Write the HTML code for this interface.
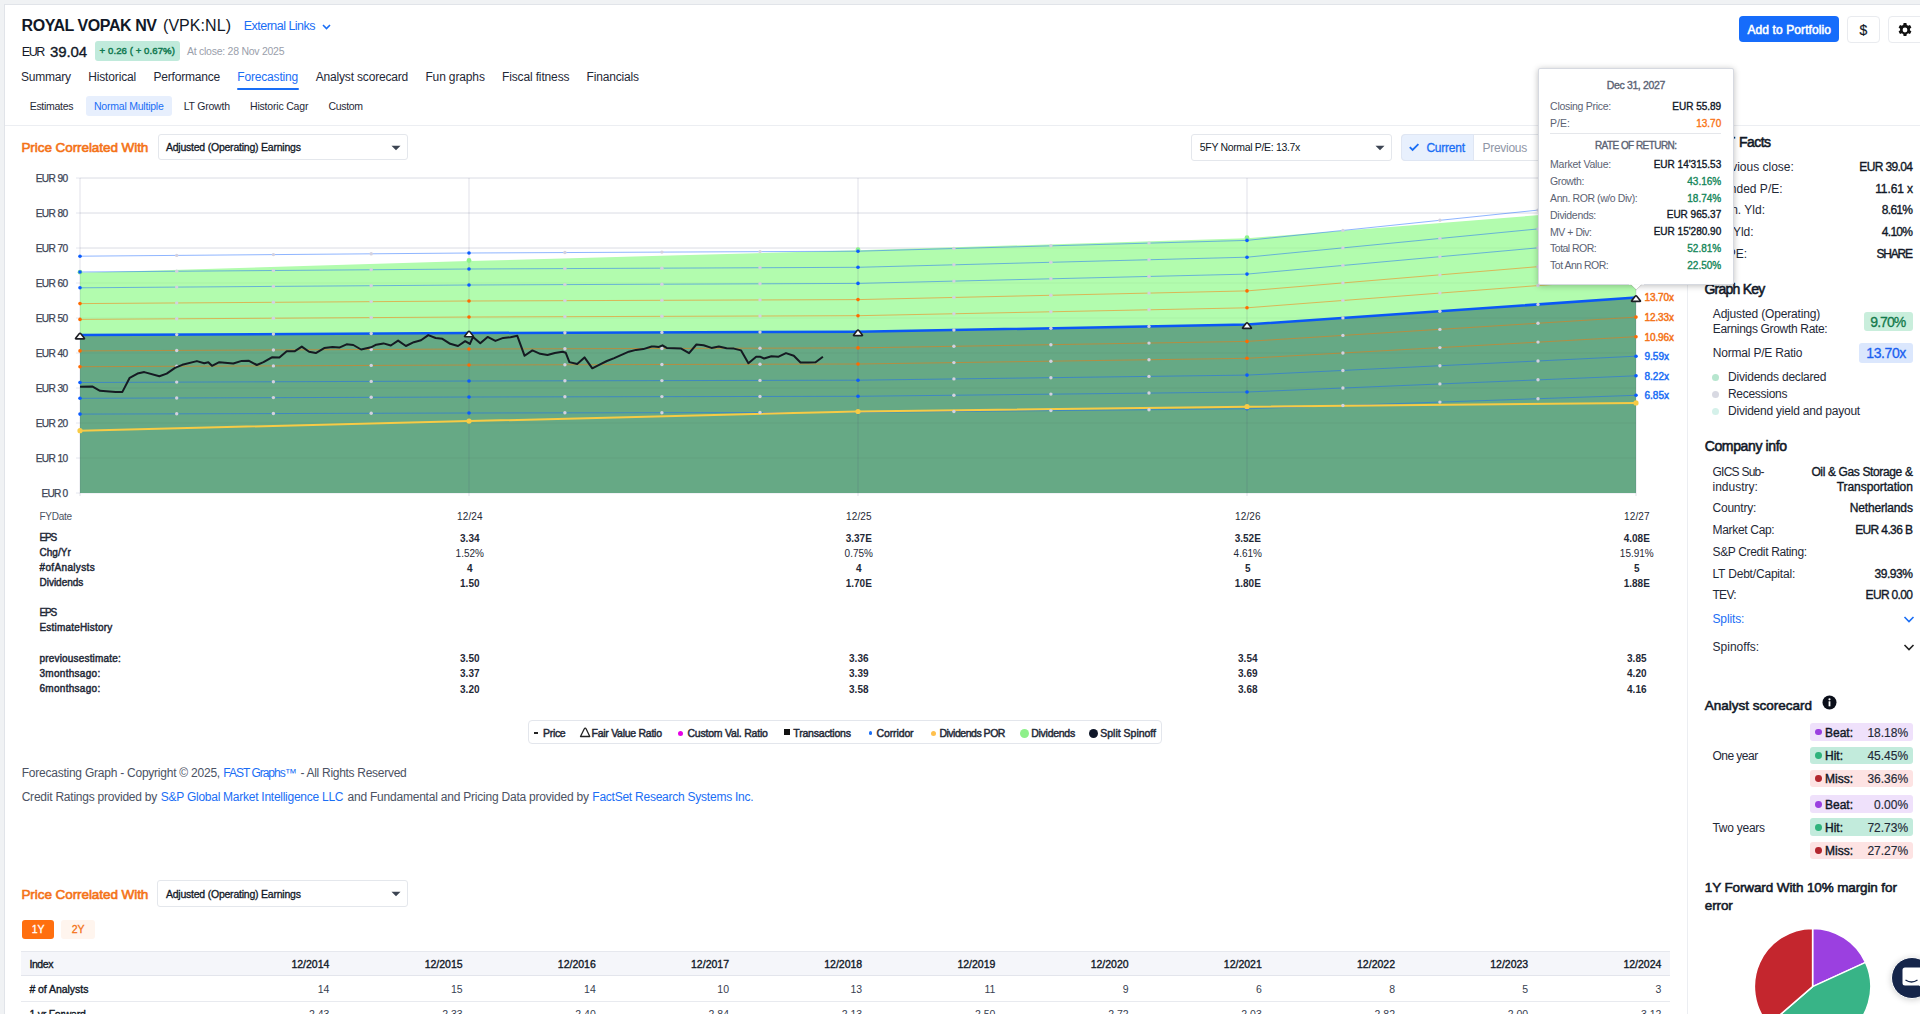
<!DOCTYPE html><html><head><meta charset="utf-8"><style>
html,body{margin:0;padding:0;width:1920px;height:1014px;overflow:hidden;background:#f0f2f4;}
body{font-family:"Liberation Sans",sans-serif;position:relative;}
.t{position:absolute;white-space:nowrap;line-height:1;}
.b{position:absolute;box-sizing:border-box;}
.abs{position:absolute;}
</style></head><body>
<div class="b" style="left:4.00px;top:3.50px;width:1926.00px;height:1026.50px;background:#fff;border:1px solid #e1e4e9;"></div>
<div class="t" style="left:21.50px;top:18.25px;font-size:16px;color:#111827;font-weight:700;letter-spacing:-0.429px;">ROYAL VOPAK NV</div>
<div class="t" style="left:163.00px;top:18.25px;font-size:16px;color:#111827;letter-spacing:0.061px;">(VPK:NL)</div>
<div class="t" style="left:243.80px;top:19.91px;font-size:12.5px;color:#1a6ef5;letter-spacing:-0.524px;">External Links</div>
<svg class="abs" style="left:321px;top:22px" width="12" height="10"><path d="M2,3 L5.5,6.5 L9,3" fill="none" stroke="#1a6ef5" stroke-width="1.6"/></svg>
<div class="t" style="left:21.80px;top:45.71px;font-size:12.5px;color:#111827;letter-spacing:-1.446px;">EUR</div>
<div class="t" style="left:49.90px;top:43.59px;font-size:15px;color:#111827;-webkit-text-stroke:0.35px #111827;letter-spacing:-0.059px;">39.04</div>
<div class="b" style="left:94.60px;top:41.30px;width:85.00px;height:19.30px;background:#c0eadb;border-radius:3px;"></div>
<div class="t" style="left:99.60px;top:45.97px;font-size:9.6px;color:#137a52;-webkit-text-stroke:0.45px #137a52;letter-spacing:0.070px;">+ 0.26 ( + 0.67%)</div>
<div class="t" style="left:187.00px;top:45.91px;font-size:10.5px;color:#9aa0ab;letter-spacing:-0.261px;">At close: 28 Nov 2025</div>
<div class="t" style="left:21.10px;top:71.14px;font-size:12px;color:#1f2937;letter-spacing:-0.240px;">Summary</div>
<div class="t" style="left:88.20px;top:71.14px;font-size:12px;color:#1f2937;letter-spacing:-0.138px;">Historical</div>
<div class="t" style="left:153.50px;top:71.14px;font-size:12px;color:#1f2937;letter-spacing:-0.200px;">Performance</div>
<div class="t" style="left:237.30px;top:71.14px;font-size:12px;color:#1a6ef5;letter-spacing:-0.180px;">Forecasting</div>
<div class="t" style="left:315.70px;top:71.14px;font-size:12px;color:#1f2937;letter-spacing:-0.173px;">Analyst scorecard</div>
<div class="t" style="left:425.40px;top:71.14px;font-size:12px;color:#1f2937;letter-spacing:-0.134px;">Fun graphs</div>
<div class="t" style="left:502.00px;top:71.14px;font-size:12px;color:#1f2937;letter-spacing:-0.142px;">Fiscal fitness</div>
<div class="t" style="left:586.60px;top:71.14px;font-size:12px;color:#1f2937;letter-spacing:-0.169px;">Financials</div>
<div class="b" style="left:237.00px;top:87.60px;width:61.60px;height:2.00px;background:#1a6ef5;border-radius:1px;"></div>
<div class="b" style="left:85.70px;top:96.00px;width:86.20px;height:20.00px;background:#e7effd;border-radius:3px;"></div>
<div class="t" style="left:29.70px;top:100.91px;font-size:10.5px;color:#1f2937;letter-spacing:-0.287px;">Estimates</div>
<div class="t" style="left:94.00px;top:100.91px;font-size:10.5px;color:#1a6ef5;letter-spacing:-0.224px;">Normal Multiple</div>
<div class="t" style="left:183.70px;top:100.91px;font-size:10.5px;color:#1f2937;letter-spacing:-0.218px;">LT Growth</div>
<div class="t" style="left:250.00px;top:100.91px;font-size:10.5px;color:#1f2937;letter-spacing:-0.190px;">Historic Cagr</div>
<div class="t" style="left:328.50px;top:100.91px;font-size:10.5px;color:#1f2937;letter-spacing:-0.315px;">Custom</div>
<div class="b" style="left:5.00px;top:124.50px;width:1915.00px;height:1.50px;background:#eceef2;"></div>
<div class="b" style="left:1739.00px;top:16.00px;width:100.00px;height:26.30px;background:#166cfb;border-radius:4px;"></div>
<div class="t" style="left:1747.50px;top:23.64px;font-size:12px;color:#fff;-webkit-text-stroke:0.55px #fff;letter-spacing:0.097px;">Add to Portfolio</div>
<div class="b" style="left:1847.00px;top:15.50px;width:33.00px;height:27.00px;background:#fff;border:1px solid #e9ebef;border-radius:4px;"></div>
<div class="t" style="left:1859.61px;top:22.64px;font-size:14px;color:#111827;-webkit-text-stroke:0.20px #111827;">$</div>
<div class="b" style="left:1888.00px;top:15.50px;width:42.00px;height:27.00px;background:#fff;border:1px solid #e9ebef;border-radius:4px;"></div>
<svg class="abs" style="left:1897px;top:21.5px" width="16" height="16" viewBox="0 0 16 16"><path fill="#111" d="M9.4 1h-2.8l-.4 2a5 5 0 0 0-1.3.8l-1.9-.7-1.4 2.4 1.5 1.3a5 5 0 0 0 0 1.5l-1.5 1.3 1.4 2.4 1.9-.7a5 5 0 0 0 1.3.8l.4 2h2.8l.4-2a5 5 0 0 0 1.3-.8l1.9.7 1.4-2.4-1.5-1.3a5 5 0 0 0 0-1.5l1.5-1.3-1.4-2.4-1.9.7a5 5 0 0 0-1.3-.8zM8 5.6a2.4 2.4 0 1 1 0 4.8 2.4 2.4 0 0 1 0-4.8z"/></svg>
<div class="t" style="left:21.40px;top:141.07px;font-size:13.5px;color:#f47216;-webkit-text-stroke:0.60px #f47216;letter-spacing:-0.065px;">Price Correlated With</div>
<div class="b" style="left:157.60px;top:133.80px;width:250.70px;height:26.60px;background:#fff;border:1px solid #e4e7ec;border-radius:3px;"></div>
<div class="t" style="left:165.90px;top:141.91px;font-size:10.5px;color:#111827;-webkit-text-stroke:0.30px #111827;letter-spacing:-0.223px;">Adjusted (Operating) Earnings</div>
<svg class="abs" style="left:390.4px;top:143.6px" width="12" height="8"><path d="M1.5,1.8 L10.5,1.8 L6,6.2Z" fill="#3c4452"/></svg>
<div class="b" style="left:1191.30px;top:133.90px;width:201.10px;height:26.70px;background:#fff;border:1px solid #e4e7ec;border-radius:3px;"></div>
<div class="t" style="left:1199.80px;top:142.06px;font-size:10.5px;color:#111827;letter-spacing:-0.334px;">5FY Normal P/E: 13.7x</div>
<svg class="abs" style="left:1374.0px;top:143.8px" width="12" height="8"><path d="M1.5,1.8 L10.5,1.8 L6,6.2Z" fill="#3c4452"/></svg>
<div class="b" style="left:1401.30px;top:133.90px;width:168.70px;height:27.30px;background:#fff;border:1px solid #e4e7ec;border-radius:4px;"></div>
<div class="b" style="left:1401.30px;top:133.90px;width:73.00px;height:27.30px;background:#e8f0fd;border:1px solid #dfe6f3;border-radius:4px 0 0 4px;"></div>
<svg class="abs" style="left:1408px;top:141px" width="12" height="12"><path d="M1.8,6.2 L4.6,9 L10.4,3.2" fill="none" stroke="#1a6ef5" stroke-width="1.8"/></svg>
<div class="t" style="left:1426.40px;top:141.94px;font-size:12px;color:#1a6ef5;-webkit-text-stroke:0.30px #1a6ef5;letter-spacing:-0.236px;">Current</div>
<div class="t" style="left:1482.40px;top:141.94px;font-size:12px;color:#8f96a6;letter-spacing:-0.255px;">Previous</div>
<svg class="abs" width="1920" height="1014" viewBox="0 0 1920 1014" style="left:0;top:0">
<line x1="76" y1="493.0" x2="1636" y2="493.0" stroke="#e4e6ee" stroke-width="1"/>
<line x1="76" y1="458.0" x2="1636" y2="458.0" stroke="#e4e6ee" stroke-width="1"/>
<line x1="76" y1="423.0" x2="1636" y2="423.0" stroke="#e4e6ee" stroke-width="1"/>
<line x1="76" y1="388.0" x2="1636" y2="388.0" stroke="#e4e6ee" stroke-width="1"/>
<line x1="76" y1="353.0" x2="1636" y2="353.0" stroke="#e4e6ee" stroke-width="1"/>
<line x1="76" y1="318.0" x2="1636" y2="318.0" stroke="#e4e6ee" stroke-width="1"/>
<line x1="76" y1="283.0" x2="1636" y2="283.0" stroke="#e4e6ee" stroke-width="1"/>
<line x1="76" y1="248.0" x2="1636" y2="248.0" stroke="#e4e6ee" stroke-width="1"/>
<line x1="76" y1="213.0" x2="1636" y2="213.0" stroke="#e4e6ee" stroke-width="1"/>
<line x1="76" y1="178.0" x2="1636" y2="178.0" stroke="#e4e6ee" stroke-width="1"/>
<polygon points="80.0,272.8 469.0,261.1 858.0,250.3 1247.0,238.3 1636.0,207.5 1636.0,297.6 1247.0,324.6 858.0,331.8 469.0,333.0 80.0,335.1" fill="#b2fcae"/>
<polygon points="80.0,335.1 469.0,333.0 858.0,331.8 1247.0,324.6 1636.0,297.6 1636.0,493.0 80.0,493.0" fill="#66a985"/>
<line x1="80.0" y1="178" x2="80.0" y2="496" stroke="rgba(60,70,110,0.16)" stroke-width="1"/>
<line x1="469.0" y1="178" x2="469.0" y2="496" stroke="rgba(60,70,110,0.16)" stroke-width="1"/>
<line x1="858.0" y1="178" x2="858.0" y2="496" stroke="rgba(60,70,110,0.16)" stroke-width="1"/>
<line x1="1247.0" y1="178" x2="1247.0" y2="496" stroke="rgba(60,70,110,0.16)" stroke-width="1"/>
<line x1="1636.0" y1="178" x2="1636.0" y2="496" stroke="rgba(60,70,110,0.16)" stroke-width="1"/>
<line x1="80" y1="458.0" x2="1636" y2="458.0" stroke="rgba(0,0,0,0.045)" stroke-width="1"/>
<line x1="80" y1="423.0" x2="1636" y2="423.0" stroke="rgba(0,0,0,0.045)" stroke-width="1"/>
<line x1="80" y1="388.0" x2="1636" y2="388.0" stroke="rgba(0,0,0,0.045)" stroke-width="1"/>
<line x1="80" y1="353.0" x2="1636" y2="353.0" stroke="rgba(0,0,0,0.045)" stroke-width="1"/>
<line x1="80" y1="318.0" x2="1636" y2="318.0" stroke="rgba(0,0,0,0.045)" stroke-width="1"/>
<line x1="80" y1="283.0" x2="1636" y2="283.0" stroke="rgba(0,0,0,0.045)" stroke-width="1"/>
<line x1="80" y1="248.0" x2="1636" y2="248.0" stroke="rgba(0,0,0,0.045)" stroke-width="1"/>
<line x1="80" y1="213.0" x2="1636" y2="213.0" stroke="rgba(0,0,0,0.045)" stroke-width="1"/>
<line x1="80" y1="178.0" x2="1636" y2="178.0" stroke="rgba(0,0,0,0.045)" stroke-width="1"/>
<polyline points="80.0,256.2 469.0,253.0 858.0,251.2 1247.0,240.4 1636.0,199.9" fill="none" stroke="rgba(20,100,255,0.48)" stroke-width="1"/>
<polyline points="80.0,272.0 469.0,269.0 858.0,267.3 1247.0,257.2 1636.0,219.4" fill="none" stroke="rgba(20,100,255,0.48)" stroke-width="1"/>
<polyline points="80.0,287.8 469.0,285.0 858.0,283.4 1247.0,274.1 1636.0,239.0" fill="none" stroke="rgba(20,100,255,0.48)" stroke-width="1"/>
<polyline points="80.0,303.6 469.0,301.0 858.0,299.6 1247.0,290.9 1636.0,258.5" fill="none" stroke="rgba(255,115,0,0.5)" stroke-width="1"/>
<polyline points="80.0,319.4 469.0,317.0 858.0,315.7 1247.0,307.8 1636.0,278.1" fill="none" stroke="rgba(255,115,0,0.5)" stroke-width="1"/>
<polyline points="80.0,335.1 469.0,333.0 858.0,331.8 1247.0,324.6 1636.0,297.6" fill="none" stroke="#0a58f5" stroke-width="2.5"/>
<polyline points="80.0,350.9 469.0,349.0 858.0,347.9 1247.0,341.4 1636.0,317.1" fill="none" stroke="rgba(255,115,0,0.5)" stroke-width="1"/>
<polyline points="80.0,366.7 469.0,365.0 858.0,364.0 1247.0,358.3 1636.0,336.7" fill="none" stroke="rgba(255,115,0,0.5)" stroke-width="1"/>
<polyline points="80.0,382.5 469.0,381.0 858.0,380.2 1247.0,375.1 1636.0,356.2" fill="none" stroke="rgba(20,100,255,0.48)" stroke-width="1"/>
<polyline points="80.0,398.3 469.0,397.0 858.0,396.3 1247.0,392.0 1636.0,375.8" fill="none" stroke="rgba(20,100,255,0.48)" stroke-width="1"/>
<polyline points="80.0,414.1 469.0,413.0 858.0,412.4 1247.0,408.8 1636.0,395.3" fill="none" stroke="rgba(20,100,255,0.48)" stroke-width="1"/>
<polyline points="80.0,430.7 469.0,421.1 858.0,411.5 1247.0,406.7 1636.0,402.9" fill="none" stroke="#f7cb45" stroke-width="2"/>
<circle cx="176.7" cy="255.4" r="1.7" fill="#d3d1e0"/>
<circle cx="273.4" cy="254.6" r="1.7" fill="#d3d1e0"/>
<circle cx="371.2" cy="253.8" r="1.7" fill="#d3d1e0"/>
<circle cx="564.9" cy="252.5" r="1.7" fill="#d3d1e0"/>
<circle cx="661.9" cy="252.1" r="1.7" fill="#d3d1e0"/>
<circle cx="760.0" cy="251.6" r="1.7" fill="#d3d1e0"/>
<circle cx="953.9" cy="248.5" r="1.7" fill="#d3d1e0"/>
<circle cx="1050.9" cy="245.8" r="1.7" fill="#d3d1e0"/>
<circle cx="1149.0" cy="243.1" r="1.7" fill="#d3d1e0"/>
<circle cx="1342.9" cy="230.4" r="1.7" fill="#d3d1e0"/>
<circle cx="1439.9" cy="220.3" r="1.7" fill="#d3d1e0"/>
<circle cx="1538.0" cy="210.1" r="1.7" fill="#d3d1e0"/>
<circle cx="176.7" cy="271.3" r="1.7" fill="#d3d1e0"/>
<circle cx="273.4" cy="270.5" r="1.7" fill="#d3d1e0"/>
<circle cx="371.2" cy="269.7" r="1.7" fill="#d3d1e0"/>
<circle cx="564.9" cy="268.6" r="1.7" fill="#d3d1e0"/>
<circle cx="661.9" cy="268.2" r="1.7" fill="#d3d1e0"/>
<circle cx="760.0" cy="267.7" r="1.7" fill="#d3d1e0"/>
<circle cx="953.9" cy="264.8" r="1.7" fill="#d3d1e0"/>
<circle cx="1050.9" cy="262.3" r="1.7" fill="#d3d1e0"/>
<circle cx="1149.0" cy="259.8" r="1.7" fill="#d3d1e0"/>
<circle cx="1342.9" cy="247.9" r="1.7" fill="#d3d1e0"/>
<circle cx="1439.9" cy="238.5" r="1.7" fill="#d3d1e0"/>
<circle cx="1538.0" cy="229.0" r="1.7" fill="#d3d1e0"/>
<circle cx="176.7" cy="287.1" r="1.7" fill="#d3d1e0"/>
<circle cx="273.4" cy="286.4" r="1.7" fill="#d3d1e0"/>
<circle cx="371.2" cy="285.7" r="1.7" fill="#d3d1e0"/>
<circle cx="564.9" cy="284.6" r="1.7" fill="#d3d1e0"/>
<circle cx="661.9" cy="284.2" r="1.7" fill="#d3d1e0"/>
<circle cx="760.0" cy="283.8" r="1.7" fill="#d3d1e0"/>
<circle cx="953.9" cy="281.1" r="1.7" fill="#d3d1e0"/>
<circle cx="1050.9" cy="278.8" r="1.7" fill="#d3d1e0"/>
<circle cx="1149.0" cy="276.4" r="1.7" fill="#d3d1e0"/>
<circle cx="1342.9" cy="265.4" r="1.7" fill="#d3d1e0"/>
<circle cx="1439.9" cy="256.7" r="1.7" fill="#d3d1e0"/>
<circle cx="1538.0" cy="247.8" r="1.7" fill="#d3d1e0"/>
<circle cx="176.7" cy="302.9" r="1.7" fill="#d3d1e0"/>
<circle cx="273.4" cy="302.3" r="1.7" fill="#d3d1e0"/>
<circle cx="371.2" cy="301.6" r="1.7" fill="#d3d1e0"/>
<circle cx="564.9" cy="300.6" r="1.7" fill="#d3d1e0"/>
<circle cx="661.9" cy="300.3" r="1.7" fill="#d3d1e0"/>
<circle cx="760.0" cy="299.9" r="1.7" fill="#d3d1e0"/>
<circle cx="953.9" cy="297.4" r="1.7" fill="#d3d1e0"/>
<circle cx="1050.9" cy="295.3" r="1.7" fill="#d3d1e0"/>
<circle cx="1149.0" cy="293.1" r="1.7" fill="#d3d1e0"/>
<circle cx="1342.9" cy="282.9" r="1.7" fill="#d3d1e0"/>
<circle cx="1439.9" cy="274.9" r="1.7" fill="#d3d1e0"/>
<circle cx="1538.0" cy="266.7" r="1.7" fill="#d3d1e0"/>
<circle cx="176.7" cy="318.8" r="1.7" fill="#d3d1e0"/>
<circle cx="273.4" cy="318.2" r="1.7" fill="#d3d1e0"/>
<circle cx="371.2" cy="317.6" r="1.7" fill="#d3d1e0"/>
<circle cx="564.9" cy="316.7" r="1.7" fill="#d3d1e0"/>
<circle cx="661.9" cy="316.3" r="1.7" fill="#d3d1e0"/>
<circle cx="760.0" cy="316.0" r="1.7" fill="#d3d1e0"/>
<circle cx="953.9" cy="313.7" r="1.7" fill="#d3d1e0"/>
<circle cx="1050.9" cy="311.7" r="1.7" fill="#d3d1e0"/>
<circle cx="1149.0" cy="309.8" r="1.7" fill="#d3d1e0"/>
<circle cx="1342.9" cy="300.4" r="1.7" fill="#d3d1e0"/>
<circle cx="1439.9" cy="293.0" r="1.7" fill="#d3d1e0"/>
<circle cx="1538.0" cy="285.5" r="1.7" fill="#d3d1e0"/>
<circle cx="176.7" cy="334.6" r="1.7" fill="#d3d1e0"/>
<circle cx="273.4" cy="334.1" r="1.7" fill="#d3d1e0"/>
<circle cx="371.2" cy="333.5" r="1.7" fill="#d3d1e0"/>
<circle cx="564.9" cy="332.7" r="1.7" fill="#d3d1e0"/>
<circle cx="661.9" cy="332.4" r="1.7" fill="#d3d1e0"/>
<circle cx="760.0" cy="332.1" r="1.7" fill="#d3d1e0"/>
<circle cx="953.9" cy="330.0" r="1.7" fill="#d3d1e0"/>
<circle cx="1050.9" cy="328.2" r="1.7" fill="#d3d1e0"/>
<circle cx="1149.0" cy="326.4" r="1.7" fill="#d3d1e0"/>
<circle cx="1342.9" cy="317.9" r="1.7" fill="#d3d1e0"/>
<circle cx="1439.9" cy="311.2" r="1.7" fill="#d3d1e0"/>
<circle cx="1538.0" cy="304.4" r="1.7" fill="#d3d1e0"/>
<circle cx="176.7" cy="350.5" r="1.7" fill="#d3d1e0"/>
<circle cx="273.4" cy="350.0" r="1.7" fill="#d3d1e0"/>
<circle cx="371.2" cy="349.5" r="1.7" fill="#d3d1e0"/>
<circle cx="564.9" cy="348.7" r="1.7" fill="#d3d1e0"/>
<circle cx="661.9" cy="348.5" r="1.7" fill="#d3d1e0"/>
<circle cx="760.0" cy="348.2" r="1.7" fill="#d3d1e0"/>
<circle cx="953.9" cy="346.3" r="1.7" fill="#d3d1e0"/>
<circle cx="1050.9" cy="344.7" r="1.7" fill="#d3d1e0"/>
<circle cx="1149.0" cy="343.1" r="1.7" fill="#d3d1e0"/>
<circle cx="1342.9" cy="335.4" r="1.7" fill="#d3d1e0"/>
<circle cx="1439.9" cy="329.4" r="1.7" fill="#d3d1e0"/>
<circle cx="1538.0" cy="323.3" r="1.7" fill="#d3d1e0"/>
<circle cx="176.7" cy="366.3" r="1.7" fill="#d3d1e0"/>
<circle cx="273.4" cy="365.9" r="1.7" fill="#d3d1e0"/>
<circle cx="371.2" cy="365.4" r="1.7" fill="#d3d1e0"/>
<circle cx="564.9" cy="364.8" r="1.7" fill="#d3d1e0"/>
<circle cx="661.9" cy="364.5" r="1.7" fill="#d3d1e0"/>
<circle cx="760.0" cy="364.3" r="1.7" fill="#d3d1e0"/>
<circle cx="953.9" cy="362.6" r="1.7" fill="#d3d1e0"/>
<circle cx="1050.9" cy="361.2" r="1.7" fill="#d3d1e0"/>
<circle cx="1149.0" cy="359.7" r="1.7" fill="#d3d1e0"/>
<circle cx="1342.9" cy="353.0" r="1.7" fill="#d3d1e0"/>
<circle cx="1439.9" cy="347.6" r="1.7" fill="#d3d1e0"/>
<circle cx="1538.0" cy="342.1" r="1.7" fill="#d3d1e0"/>
<circle cx="176.7" cy="382.1" r="1.7" fill="#d3d1e0"/>
<circle cx="273.4" cy="381.8" r="1.7" fill="#d3d1e0"/>
<circle cx="371.2" cy="381.4" r="1.7" fill="#d3d1e0"/>
<circle cx="564.9" cy="380.8" r="1.7" fill="#d3d1e0"/>
<circle cx="661.9" cy="380.6" r="1.7" fill="#d3d1e0"/>
<circle cx="760.0" cy="380.4" r="1.7" fill="#d3d1e0"/>
<circle cx="953.9" cy="378.9" r="1.7" fill="#d3d1e0"/>
<circle cx="1050.9" cy="377.7" r="1.7" fill="#d3d1e0"/>
<circle cx="1149.0" cy="376.4" r="1.7" fill="#d3d1e0"/>
<circle cx="1342.9" cy="370.5" r="1.7" fill="#d3d1e0"/>
<circle cx="1439.9" cy="365.7" r="1.7" fill="#d3d1e0"/>
<circle cx="1538.0" cy="361.0" r="1.7" fill="#d3d1e0"/>
<circle cx="176.7" cy="398.0" r="1.7" fill="#d3d1e0"/>
<circle cx="273.4" cy="397.6" r="1.7" fill="#d3d1e0"/>
<circle cx="371.2" cy="397.3" r="1.7" fill="#d3d1e0"/>
<circle cx="564.9" cy="396.8" r="1.7" fill="#d3d1e0"/>
<circle cx="661.9" cy="396.6" r="1.7" fill="#d3d1e0"/>
<circle cx="760.0" cy="396.5" r="1.7" fill="#d3d1e0"/>
<circle cx="953.9" cy="395.2" r="1.7" fill="#d3d1e0"/>
<circle cx="1050.9" cy="394.1" r="1.7" fill="#d3d1e0"/>
<circle cx="1149.0" cy="393.0" r="1.7" fill="#d3d1e0"/>
<circle cx="1342.9" cy="388.0" r="1.7" fill="#d3d1e0"/>
<circle cx="1439.9" cy="383.9" r="1.7" fill="#d3d1e0"/>
<circle cx="1538.0" cy="379.8" r="1.7" fill="#d3d1e0"/>
<circle cx="176.7" cy="413.8" r="1.7" fill="#d3d1e0"/>
<circle cx="273.4" cy="413.5" r="1.7" fill="#d3d1e0"/>
<circle cx="371.2" cy="413.3" r="1.7" fill="#d3d1e0"/>
<circle cx="564.9" cy="412.8" r="1.7" fill="#d3d1e0"/>
<circle cx="661.9" cy="412.7" r="1.7" fill="#d3d1e0"/>
<circle cx="760.0" cy="412.5" r="1.7" fill="#d3d1e0"/>
<circle cx="953.9" cy="411.5" r="1.7" fill="#d3d1e0"/>
<circle cx="1050.9" cy="410.6" r="1.7" fill="#d3d1e0"/>
<circle cx="1149.0" cy="409.7" r="1.7" fill="#d3d1e0"/>
<circle cx="1342.9" cy="405.5" r="1.7" fill="#d3d1e0"/>
<circle cx="1439.9" cy="402.1" r="1.7" fill="#d3d1e0"/>
<circle cx="1538.0" cy="398.7" r="1.7" fill="#d3d1e0"/>
<circle cx="80.0" cy="272.2" r="2.4" fill="#8ef28c"/>
<circle cx="469.0" cy="260.5" r="2.4" fill="#8ef28c"/>
<circle cx="858.0" cy="249.7" r="2.4" fill="#8ef28c"/>
<circle cx="1247.0" cy="237.7" r="2.4" fill="#8ef28c"/>
<circle cx="1636.0" cy="206.9" r="2.4" fill="#8ef28c"/>
<circle cx="80.0" cy="256.2" r="1.8" fill="#0b5cff"/>
<circle cx="469.0" cy="253.0" r="1.8" fill="#0b5cff"/>
<circle cx="858.0" cy="251.2" r="1.8" fill="#0b5cff"/>
<circle cx="1247.0" cy="240.4" r="1.8" fill="#0b5cff"/>
<circle cx="1636.0" cy="199.9" r="1.8" fill="#0b5cff"/>
<circle cx="80.0" cy="272.0" r="1.8" fill="#0b5cff"/>
<circle cx="469.0" cy="269.0" r="1.8" fill="#0b5cff"/>
<circle cx="858.0" cy="267.3" r="1.8" fill="#0b5cff"/>
<circle cx="1247.0" cy="257.2" r="1.8" fill="#0b5cff"/>
<circle cx="1636.0" cy="219.4" r="1.8" fill="#0b5cff"/>
<circle cx="80.0" cy="287.8" r="1.8" fill="#0b5cff"/>
<circle cx="469.0" cy="285.0" r="1.8" fill="#0b5cff"/>
<circle cx="858.0" cy="283.4" r="1.8" fill="#0b5cff"/>
<circle cx="1247.0" cy="274.1" r="1.8" fill="#0b5cff"/>
<circle cx="1636.0" cy="239.0" r="1.8" fill="#0b5cff"/>
<circle cx="80.0" cy="303.6" r="1.8" fill="#ff6a00"/>
<circle cx="469.0" cy="301.0" r="1.8" fill="#ff6a00"/>
<circle cx="858.0" cy="299.6" r="1.8" fill="#ff6a00"/>
<circle cx="1247.0" cy="290.9" r="1.8" fill="#ff6a00"/>
<circle cx="1636.0" cy="258.5" r="1.8" fill="#ff6a00"/>
<circle cx="80.0" cy="319.4" r="1.8" fill="#ff6a00"/>
<circle cx="469.0" cy="317.0" r="1.8" fill="#ff6a00"/>
<circle cx="858.0" cy="315.7" r="1.8" fill="#ff6a00"/>
<circle cx="1247.0" cy="307.8" r="1.8" fill="#ff6a00"/>
<circle cx="1636.0" cy="278.1" r="1.8" fill="#ff6a00"/>
<circle cx="80.0" cy="350.9" r="1.8" fill="#ff6a00"/>
<circle cx="469.0" cy="349.0" r="1.8" fill="#ff6a00"/>
<circle cx="858.0" cy="347.9" r="1.8" fill="#ff6a00"/>
<circle cx="1247.0" cy="341.4" r="1.8" fill="#ff6a00"/>
<circle cx="1636.0" cy="317.1" r="1.8" fill="#ff6a00"/>
<circle cx="80.0" cy="366.7" r="1.8" fill="#ff6a00"/>
<circle cx="469.0" cy="365.0" r="1.8" fill="#ff6a00"/>
<circle cx="858.0" cy="364.0" r="1.8" fill="#ff6a00"/>
<circle cx="1247.0" cy="358.3" r="1.8" fill="#ff6a00"/>
<circle cx="1636.0" cy="336.7" r="1.8" fill="#ff6a00"/>
<circle cx="80.0" cy="382.5" r="1.8" fill="#0b5cff"/>
<circle cx="469.0" cy="381.0" r="1.8" fill="#0b5cff"/>
<circle cx="858.0" cy="380.2" r="1.8" fill="#0b5cff"/>
<circle cx="1247.0" cy="375.1" r="1.8" fill="#0b5cff"/>
<circle cx="1636.0" cy="356.2" r="1.8" fill="#0b5cff"/>
<circle cx="80.0" cy="398.3" r="1.8" fill="#0b5cff"/>
<circle cx="469.0" cy="397.0" r="1.8" fill="#0b5cff"/>
<circle cx="858.0" cy="396.3" r="1.8" fill="#0b5cff"/>
<circle cx="1247.0" cy="392.0" r="1.8" fill="#0b5cff"/>
<circle cx="1636.0" cy="375.8" r="1.8" fill="#0b5cff"/>
<circle cx="80.0" cy="414.1" r="1.8" fill="#0b5cff"/>
<circle cx="469.0" cy="413.0" r="1.8" fill="#0b5cff"/>
<circle cx="858.0" cy="412.4" r="1.8" fill="#0b5cff"/>
<circle cx="1247.0" cy="408.8" r="1.8" fill="#0b5cff"/>
<circle cx="1636.0" cy="395.3" r="1.8" fill="#0b5cff"/>
<circle cx="80.0" cy="430.7" r="2.6" fill="#f7cb45"/>
<circle cx="469.0" cy="421.1" r="2.6" fill="#f7cb45"/>
<circle cx="858.0" cy="411.5" r="2.6" fill="#f7cb45"/>
<circle cx="1247.0" cy="406.7" r="2.6" fill="#f7cb45"/>
<circle cx="1636.0" cy="402.9" r="2.6" fill="#f7cb45"/>
<polyline points="80.0,386.7 92.2,386.4 100.0,390.8 115.6,392.1 122.4,391.9 129.7,377.8 137.5,373.6 144.3,372.1 159.4,376.2 166.7,373.6 175.0,367.9 182.3,364.8 196.9,361.1 204.2,363.2 208.3,362.2 212.0,365.8 219.3,362.2 233.3,363.5 241.7,360.9 249.0,360.8 256.8,365.0 263.5,362.2 271.9,357.3 279.4,357.5 286.7,351.3 294.5,351.3 301.8,346.6 309.1,351.8 315.8,353.1 324.2,348.1 332.5,346.9 339.3,347.6 346.6,344.3 353.3,345.0 361.1,349.5 371.0,347.3 376.2,344.7 383.5,343.4 390.8,345.5 398.1,340.6 405.9,346.0 413.8,342.2 421.0,340.3 428.3,335.1 435.6,338.0 442.4,338.8 450.2,343.8 458.0,346.0 465.2,341.2 469.9,343.9 473.0,336.9 480.3,343.3 487.6,336.9 495.4,340.9 503.2,337.9 510.5,337.3 517.3,335.8 524.6,355.8 532.4,350.4 540.2,353.8 547.5,355.0 554.8,353.0 562.6,351.7 565.7,352.7 569.4,362.1 577.2,364.0 584.5,357.4 592.3,368.3 599.6,364.7 606.9,361.0 614.2,358.1 621.5,354.8 628.8,351.7 636.0,349.9 643.3,349.1 651.7,346.5 654.2,346.6 658.9,346.9 662.5,345.3 666.7,347.9 674.0,348.3 681.2,348.6 689.1,353.1 696.4,344.5 703.6,345.2 711.5,347.9 718.8,346.6 726.6,348.3 733.9,348.6 741.1,350.4 748.4,363.2 756.2,356.7 759.9,356.7 764.1,358.5 771.4,356.2 778.6,356.7 786.0,353.1 793.8,355.7 800.5,362.5 808.3,362.5 815.6,362.2 822.9,356.7" fill="none" stroke="#151a22" stroke-width="2" stroke-linejoin="round"/>
<path d="M76.1,338.9 Q75.1,338.9 75.8,338.0 L79.2,333.8 Q80.0,332.8 80.8,333.8 L84.2,338.0 Q84.9,338.9 83.9,338.9 Z" fill="#fff" stroke="#1d1f24" stroke-width="1.6" stroke-linejoin="round"/>
<path d="M465.1,336.8 Q464.1,336.8 464.8,335.9 L468.2,331.7 Q469.0,330.7 469.8,331.7 L473.2,335.9 Q473.9,336.8 472.9,336.8 Z" fill="#fff" stroke="#1d1f24" stroke-width="1.6" stroke-linejoin="round"/>
<path d="M854.1,335.6 Q853.1,335.6 853.8,334.7 L857.2,330.5 Q858.0,329.5 858.8,330.5 L862.2,334.7 Q862.9,335.6 861.9,335.6 Z" fill="#fff" stroke="#1d1f24" stroke-width="1.6" stroke-linejoin="round"/>
<path d="M1243.1,328.4 Q1242.1,328.4 1242.8,327.5 L1246.2,323.3 Q1247.0,322.3 1247.8,323.3 L1251.2,327.5 Q1251.9,328.4 1250.9,328.4 Z" fill="#fff" stroke="#1d1f24" stroke-width="1.6" stroke-linejoin="round"/>
<path d="M1632.1,301.4 Q1631.1,301.4 1631.8,300.5 L1635.2,296.3 Q1636.0,295.3 1636.8,296.3 L1640.2,300.5 Q1640.9,301.4 1639.9,301.4 Z" fill="#fff" stroke="#1d1f24" stroke-width="1.6" stroke-linejoin="round"/>
</svg><div class="t" style="left:41.60px;top:488.66px;font-size:10.2px;color:#3d4556;-webkit-text-stroke:0.25px #3d4556;letter-spacing:-0.861px;">EUR 0</div>
<div class="t" style="left:35.70px;top:453.66px;font-size:10.2px;color:#3d4556;-webkit-text-stroke:0.25px #3d4556;letter-spacing:-0.643px;">EUR 10</div>
<div class="t" style="left:35.70px;top:418.66px;font-size:10.2px;color:#3d4556;-webkit-text-stroke:0.25px #3d4556;letter-spacing:-0.643px;">EUR 20</div>
<div class="t" style="left:35.70px;top:383.66px;font-size:10.2px;color:#3d4556;-webkit-text-stroke:0.25px #3d4556;letter-spacing:-0.643px;">EUR 30</div>
<div class="t" style="left:35.70px;top:348.66px;font-size:10.2px;color:#3d4556;-webkit-text-stroke:0.25px #3d4556;letter-spacing:-0.643px;">EUR 40</div>
<div class="t" style="left:35.70px;top:313.66px;font-size:10.2px;color:#3d4556;-webkit-text-stroke:0.25px #3d4556;letter-spacing:-0.643px;">EUR 50</div>
<div class="t" style="left:35.70px;top:278.66px;font-size:10.2px;color:#3d4556;-webkit-text-stroke:0.25px #3d4556;letter-spacing:-0.643px;">EUR 60</div>
<div class="t" style="left:35.70px;top:243.66px;font-size:10.2px;color:#3d4556;-webkit-text-stroke:0.25px #3d4556;letter-spacing:-0.643px;">EUR 70</div>
<div class="t" style="left:35.70px;top:208.66px;font-size:10.2px;color:#3d4556;-webkit-text-stroke:0.25px #3d4556;letter-spacing:-0.643px;">EUR 80</div>
<div class="t" style="left:35.70px;top:173.66px;font-size:10.2px;color:#3d4556;-webkit-text-stroke:0.25px #3d4556;letter-spacing:-0.643px;">EUR 90</div>
<div class="t" style="left:1644.50px;top:293.43px;font-size:10px;color:#f47216;-webkit-text-stroke:0.45px #f47216;letter-spacing:-0.105px;">13.70x</div>
<div class="t" style="left:1644.50px;top:312.97px;font-size:10px;color:#f47216;-webkit-text-stroke:0.45px #f47216;letter-spacing:-0.105px;">12.33x</div>
<div class="t" style="left:1644.50px;top:332.51px;font-size:10px;color:#f47216;-webkit-text-stroke:0.45px #f47216;letter-spacing:-0.105px;">10.96x</div>
<div class="t" style="left:1644.50px;top:352.05px;font-size:10px;color:#1a6ef5;-webkit-text-stroke:0.45px #1a6ef5;letter-spacing:0.009px;">9.59x</div>
<div class="t" style="left:1644.50px;top:371.59px;font-size:10px;color:#1a6ef5;-webkit-text-stroke:0.45px #1a6ef5;letter-spacing:0.009px;">8.22x</div>
<div class="t" style="left:1644.50px;top:391.13px;font-size:10px;color:#1a6ef5;-webkit-text-stroke:0.45px #1a6ef5;letter-spacing:0.009px;">6.85x</div>
<div class="t" style="left:39.50px;top:511.83px;font-size:10px;color:#4b5262;letter-spacing:-0.280px;">FYDate</div>
<div class="t" style="left:457.05px;top:512.33px;font-size:10px;color:#1f2937;letter-spacing:0.119px;">12/24</div>
<div class="t" style="left:846.05px;top:512.33px;font-size:10px;color:#1f2937;letter-spacing:0.119px;">12/25</div>
<div class="t" style="left:1235.05px;top:512.33px;font-size:10px;color:#1f2937;letter-spacing:0.119px;">12/26</div>
<div class="t" style="left:1624.05px;top:512.33px;font-size:10px;color:#1f2937;letter-spacing:0.119px;">12/27</div>
<div class="t" style="left:39.50px;top:533.13px;font-size:10px;color:#1f2937;-webkit-text-stroke:0.45px #1f2937;letter-spacing:-1.155px;">EPS</div>
<div class="t" style="left:460.07px;top:533.63px;font-size:10px;color:#1f2937;font-weight:700;">3.34</div>
<div class="t" style="left:845.73px;top:533.63px;font-size:10px;color:#1f2937;font-weight:700;">3.37E</div>
<div class="t" style="left:1234.73px;top:533.63px;font-size:10px;color:#1f2937;font-weight:700;">3.52E</div>
<div class="t" style="left:1623.73px;top:533.63px;font-size:10px;color:#1f2937;font-weight:700;">4.08E</div>
<div class="t" style="left:39.50px;top:548.33px;font-size:10px;color:#1f2937;-webkit-text-stroke:0.45px #1f2937;letter-spacing:0.025px;">Chg/Yr</div>
<div class="t" style="left:455.62px;top:548.83px;font-size:10px;color:#1f2937;">1.52%</div>
<div class="t" style="left:844.62px;top:548.83px;font-size:10px;color:#1f2937;">0.75%</div>
<div class="t" style="left:1233.62px;top:548.83px;font-size:10px;color:#1f2937;">4.61%</div>
<div class="t" style="left:1619.84px;top:548.83px;font-size:10px;color:#1f2937;">15.91%</div>
<div class="t" style="left:39.50px;top:563.33px;font-size:10px;color:#1f2937;-webkit-text-stroke:0.45px #1f2937;letter-spacing:0.351px;">#ofAnalysts</div>
<div class="t" style="left:467.02px;top:563.83px;font-size:10px;color:#1f2937;font-weight:700;">4</div>
<div class="t" style="left:856.02px;top:563.83px;font-size:10px;color:#1f2937;font-weight:700;">4</div>
<div class="t" style="left:1245.02px;top:563.83px;font-size:10px;color:#1f2937;font-weight:700;">5</div>
<div class="t" style="left:1634.02px;top:563.83px;font-size:10px;color:#1f2937;font-weight:700;">5</div>
<div class="t" style="left:39.50px;top:578.33px;font-size:10px;color:#1f2937;-webkit-text-stroke:0.45px #1f2937;letter-spacing:-0.020px;">Dividends</div>
<div class="t" style="left:460.07px;top:578.83px;font-size:10px;color:#1f2937;font-weight:700;">1.50</div>
<div class="t" style="left:845.73px;top:578.83px;font-size:10px;color:#1f2937;font-weight:700;">1.70E</div>
<div class="t" style="left:1234.73px;top:578.83px;font-size:10px;color:#1f2937;font-weight:700;">1.80E</div>
<div class="t" style="left:1623.73px;top:578.83px;font-size:10px;color:#1f2937;font-weight:700;">1.88E</div>
<div class="t" style="left:39.50px;top:608.33px;font-size:10px;color:#1f2937;-webkit-text-stroke:0.45px #1f2937;letter-spacing:-1.155px;">EPS</div>
<div class="t" style="left:39.50px;top:623.33px;font-size:10px;color:#1f2937;-webkit-text-stroke:0.45px #1f2937;letter-spacing:0.192px;">EstimateHistory</div>
<div class="t" style="left:39.50px;top:653.93px;font-size:10px;color:#1f2937;-webkit-text-stroke:0.45px #1f2937;letter-spacing:0.180px;">previousestimate:</div>
<div class="t" style="left:460.07px;top:654.43px;font-size:10px;color:#1f2937;font-weight:700;">3.50</div>
<div class="t" style="left:849.07px;top:654.43px;font-size:10px;color:#1f2937;font-weight:700;">3.36</div>
<div class="t" style="left:1238.07px;top:654.43px;font-size:10px;color:#1f2937;font-weight:700;">3.54</div>
<div class="t" style="left:1627.07px;top:654.43px;font-size:10px;color:#1f2937;font-weight:700;">3.85</div>
<div class="t" style="left:39.50px;top:668.93px;font-size:10px;color:#1f2937;-webkit-text-stroke:0.45px #1f2937;letter-spacing:0.288px;">3monthsago:</div>
<div class="t" style="left:460.07px;top:669.43px;font-size:10px;color:#1f2937;font-weight:700;">3.37</div>
<div class="t" style="left:849.07px;top:669.43px;font-size:10px;color:#1f2937;font-weight:700;">3.39</div>
<div class="t" style="left:1238.07px;top:669.43px;font-size:10px;color:#1f2937;font-weight:700;">3.69</div>
<div class="t" style="left:1627.07px;top:669.43px;font-size:10px;color:#1f2937;font-weight:700;">4.20</div>
<div class="t" style="left:39.50px;top:684.13px;font-size:10px;color:#1f2937;-webkit-text-stroke:0.45px #1f2937;letter-spacing:0.288px;">6monthsago:</div>
<div class="t" style="left:460.07px;top:684.63px;font-size:10px;color:#1f2937;font-weight:700;">3.20</div>
<div class="t" style="left:849.07px;top:684.63px;font-size:10px;color:#1f2937;font-weight:700;">3.58</div>
<div class="t" style="left:1238.07px;top:684.63px;font-size:10px;color:#1f2937;font-weight:700;">3.68</div>
<div class="t" style="left:1627.07px;top:684.63px;font-size:10px;color:#1f2937;font-weight:700;">4.16</div>
<div class="b" style="left:528.30px;top:720.20px;width:633.70px;height:24.00px;background:#fff;border:1px solid #e3e6ec;border-radius:4px;"></div>
<div class="b" style="left:534.40px;top:732.00px;width:3.60px;height:2.20px;background:#222;"></div>
<div class="t" style="left:543.00px;top:727.71px;font-size:10.5px;color:#1f2937;-webkit-text-stroke:0.45px #1f2937;letter-spacing:-0.306px;">Price</div>
<svg class="abs" style="left:579px;top:726px" width="13" height="12"><path d="M1.5,10.5 L5.2,3 Q6.2,1.4 7.2,3 L10.8,10.5Z" fill="#fff" stroke="#222" stroke-width="1.3" stroke-linejoin="round"/></svg>
<div class="t" style="left:591.50px;top:727.71px;font-size:10.5px;color:#1f2937;-webkit-text-stroke:0.45px #1f2937;letter-spacing:-0.267px;">Fair Value Ratio</div>
<div class="b" style="left:678.4px;top:730.5px;width:5px;height:5px;border-radius:50%;background:#e600e6"></div>
<div class="t" style="left:687.40px;top:727.71px;font-size:10.5px;color:#1f2937;-webkit-text-stroke:0.45px #1f2937;letter-spacing:-0.209px;">Custom Val. Ratio</div>
<div class="b" style="left:784.00px;top:729.00px;width:6.00px;height:6.00px;background:#111;"></div>
<div class="t" style="left:793.30px;top:727.71px;font-size:10.5px;color:#1f2937;-webkit-text-stroke:0.45px #1f2937;letter-spacing:-0.184px;">Transactions</div>
<div class="b" style="left:868.9px;top:731.3px;width:3.5px;height:3.5px;border-radius:50%;background:#1a6ef5"></div>
<div class="t" style="left:876.50px;top:727.71px;font-size:10.5px;color:#1f2937;-webkit-text-stroke:0.45px #1f2937;letter-spacing:-0.118px;">Corridor</div>
<div class="b" style="left:930.8px;top:730.6px;width:5px;height:5px;border-radius:50%;background:#ffc04d"></div>
<div class="t" style="left:939.40px;top:727.71px;font-size:10.5px;color:#1f2937;-webkit-text-stroke:0.45px #1f2937;letter-spacing:-0.481px;">Dividends POR</div>
<div class="b" style="left:1019.8px;top:728.5px;width:9.5px;height:9.5px;border-radius:50%;background:#8ef08a"></div>
<div class="t" style="left:1031.20px;top:727.71px;font-size:10.5px;color:#1f2937;-webkit-text-stroke:0.45px #1f2937;letter-spacing:-0.263px;">Dividends</div>
<div class="b" style="left:1088.9px;top:728.5px;width:9.5px;height:9.5px;border-radius:50%;background:#0f1729"></div>
<div class="t" style="left:1100.30px;top:727.71px;font-size:10.5px;color:#1f2937;-webkit-text-stroke:0.45px #1f2937;letter-spacing:-0.012px;">Split Spinoff</div>
<div class="t" style="left:21.70px;top:767.44px;font-size:12px;color:#4b5263;letter-spacing:-0.235px;">Forecasting Graph - Copyright © 2025,</div>
<div class="t" style="left:223.30px;top:767.44px;font-size:12px;color:#1a6ef5;letter-spacing:-1.007px;">FAST Graphs™</div>
<div class="t" style="left:300.40px;top:767.44px;font-size:12px;color:#4b5263;letter-spacing:-0.287px;">- All Rights Reserved</div>
<div class="t" style="left:21.70px;top:790.84px;font-size:12px;color:#4b5263;letter-spacing:-0.232px;">Credit Ratings provided by</div>
<div class="t" style="left:160.80px;top:790.84px;font-size:12px;color:#1a6ef5;letter-spacing:-0.258px;">S&amp;P Global Market Intelligence LLC</div>
<div class="t" style="left:347.50px;top:790.84px;font-size:12px;color:#4b5263;letter-spacing:-0.217px;">and Fundamental and Pricing Data provided by</div>
<div class="t" style="left:592.30px;top:790.84px;font-size:12px;color:#1a6ef5;letter-spacing:-0.241px;">FactSet Research Systems Inc.</div>
<div class="t" style="left:21.40px;top:887.57px;font-size:13.5px;color:#f47216;-webkit-text-stroke:0.60px #f47216;letter-spacing:-0.065px;">Price Correlated With</div>
<div class="b" style="left:157.10px;top:880.40px;width:251.20px;height:27.00px;background:#fff;border:1px solid #e4e7ec;border-radius:3px;"></div>
<div class="t" style="left:165.90px;top:888.71px;font-size:10.5px;color:#111827;-webkit-text-stroke:0.30px #111827;letter-spacing:-0.223px;">Adjusted (Operating) Earnings</div>
<svg class="abs" style="left:390.4px;top:890.4px" width="12" height="8"><path d="M1.5,1.8 L10.5,1.8 L6,6.2Z" fill="#3c4452"/></svg>
<div class="b" style="left:22.00px;top:920.10px;width:32.10px;height:18.80px;background:#ff6f0f;border-radius:3px;"></div>
<div class="t" style="left:31.63px;top:924.31px;font-size:10.5px;color:#fff;-webkit-text-stroke:0.30px #fff;">1Y</div>
<div class="b" style="left:61.40px;top:920.10px;width:33.40px;height:18.80px;background:#fff5ee;border-radius:3px;"></div>
<div class="t" style="left:71.68px;top:924.31px;font-size:10.5px;color:#f47216;-webkit-text-stroke:0.30px #f47216;">2Y</div>
<div class="b" style="left:21.40px;top:951.20px;width:1648.60px;height:25.30px;background:#f5f6fa;border-top:1px solid #e6e8ee;border-bottom:1px solid #e3e5ec;"></div>
<div class="b" style="left:21.40px;top:1001.20px;width:1648.60px;height:1.20px;background:#e8eaef;"></div>
<div class="t" style="left:29.40px;top:958.61px;font-size:10.5px;color:#111827;-webkit-text-stroke:0.35px #111827;letter-spacing:-0.422px;">Index</div>
<div class="t" style="left:29.40px;top:983.71px;font-size:10.5px;color:#111827;-webkit-text-stroke:0.35px #111827;letter-spacing:-0.045px;"># of Analysts</div>
<div class="t" style="left:29.40px;top:1008.71px;font-size:10.5px;color:#111827;-webkit-text-stroke:0.35px #111827;letter-spacing:-0.230px;">1 yr Forward</div>
<div class="t" style="left:291.44px;top:958.61px;font-size:10.5px;color:#111827;-webkit-text-stroke:0.35px #111827;">12/2014</div>
<div class="t" style="left:317.72px;top:983.71px;font-size:10.5px;color:#374151;">14</div>
<div class="t" style="left:308.96px;top:1008.71px;font-size:10.5px;color:#374151;">2.43</div>
<div class="t" style="left:424.64px;top:958.61px;font-size:10.5px;color:#111827;-webkit-text-stroke:0.35px #111827;">12/2015</div>
<div class="t" style="left:450.92px;top:983.71px;font-size:10.5px;color:#374151;">15</div>
<div class="t" style="left:442.16px;top:1008.71px;font-size:10.5px;color:#374151;">2.33</div>
<div class="t" style="left:557.84px;top:958.61px;font-size:10.5px;color:#111827;-webkit-text-stroke:0.35px #111827;">12/2016</div>
<div class="t" style="left:584.12px;top:983.71px;font-size:10.5px;color:#374151;">14</div>
<div class="t" style="left:575.36px;top:1008.71px;font-size:10.5px;color:#374151;">2.40</div>
<div class="t" style="left:691.04px;top:958.61px;font-size:10.5px;color:#111827;-webkit-text-stroke:0.35px #111827;">12/2017</div>
<div class="t" style="left:717.32px;top:983.71px;font-size:10.5px;color:#374151;">10</div>
<div class="t" style="left:708.56px;top:1008.71px;font-size:10.5px;color:#374151;">2.84</div>
<div class="t" style="left:824.24px;top:958.61px;font-size:10.5px;color:#111827;-webkit-text-stroke:0.35px #111827;">12/2018</div>
<div class="t" style="left:850.52px;top:983.71px;font-size:10.5px;color:#374151;">13</div>
<div class="t" style="left:841.76px;top:1008.71px;font-size:10.5px;color:#374151;">2.13</div>
<div class="t" style="left:957.44px;top:958.61px;font-size:10.5px;color:#111827;-webkit-text-stroke:0.35px #111827;">12/2019</div>
<div class="t" style="left:984.50px;top:983.71px;font-size:10.5px;color:#374151;">11</div>
<div class="t" style="left:974.96px;top:1008.71px;font-size:10.5px;color:#374151;">2.50</div>
<div class="t" style="left:1090.64px;top:958.61px;font-size:10.5px;color:#111827;-webkit-text-stroke:0.35px #111827;">12/2020</div>
<div class="t" style="left:1122.76px;top:983.71px;font-size:10.5px;color:#374151;">9</div>
<div class="t" style="left:1108.16px;top:1008.71px;font-size:10.5px;color:#374151;">2.72</div>
<div class="t" style="left:1223.84px;top:958.61px;font-size:10.5px;color:#111827;-webkit-text-stroke:0.35px #111827;">12/2021</div>
<div class="t" style="left:1255.96px;top:983.71px;font-size:10.5px;color:#374151;">6</div>
<div class="t" style="left:1241.36px;top:1008.71px;font-size:10.5px;color:#374151;">2.03</div>
<div class="t" style="left:1357.04px;top:958.61px;font-size:10.5px;color:#111827;-webkit-text-stroke:0.35px #111827;">12/2022</div>
<div class="t" style="left:1389.16px;top:983.71px;font-size:10.5px;color:#374151;">8</div>
<div class="t" style="left:1374.56px;top:1008.71px;font-size:10.5px;color:#374151;">2.82</div>
<div class="t" style="left:1490.24px;top:958.61px;font-size:10.5px;color:#111827;-webkit-text-stroke:0.35px #111827;">12/2023</div>
<div class="t" style="left:1522.36px;top:983.71px;font-size:10.5px;color:#374151;">5</div>
<div class="t" style="left:1507.76px;top:1008.71px;font-size:10.5px;color:#374151;">2.00</div>
<div class="t" style="left:1623.44px;top:958.61px;font-size:10.5px;color:#111827;-webkit-text-stroke:0.35px #111827;">12/2024</div>
<div class="t" style="left:1655.56px;top:983.71px;font-size:10.5px;color:#374151;">3</div>
<div class="t" style="left:1640.96px;top:1008.71px;font-size:10.5px;color:#374151;">3.12</div>
<div class="b" style="left:1686.50px;top:126.00px;width:1.20px;height:888.00px;background:#eceef2;"></div>
<div class="t" style="left:1704.50px;top:134.74px;font-size:14px;color:#111827;-webkit-text-stroke:0.55px #111827;letter-spacing:-1.502px;">FAST</div>
<div class="t" style="left:1738.90px;top:134.74px;font-size:14px;color:#111827;-webkit-text-stroke:0.55px #111827;letter-spacing:-0.532px;">Facts</div>
<div class="t" style="left:1712.50px;top:160.64px;font-size:12px;color:#1f2937;">Previous close:</div>
<div class="t" style="left:1859.30px;top:160.64px;font-size:12px;color:#111827;-webkit-text-stroke:0.35px #111827;letter-spacing:-0.625px;">EUR 39.04</div>
<div class="t" style="left:1712.50px;top:182.64px;font-size:12px;color:#1f2937;">Blended P/E:</div>
<div class="t" style="left:1875.20px;top:182.64px;font-size:12px;color:#111827;-webkit-text-stroke:0.35px #111827;letter-spacing:-0.112px;">11.61 x</div>
<div class="t" style="left:1712.50px;top:204.34px;font-size:12px;color:#1f2937;">Earn. Yld:</div>
<div class="t" style="left:1881.80px;top:204.34px;font-size:12px;color:#111827;-webkit-text-stroke:0.35px #111827;letter-spacing:-0.706px;">8.61%</div>
<div class="t" style="left:1712.50px;top:225.84px;font-size:12px;color:#1f2937;">Div Yld:</div>
<div class="t" style="left:1881.80px;top:225.84px;font-size:12px;color:#111827;-webkit-text-stroke:0.35px #111827;letter-spacing:-0.706px;">4.10%</div>
<div class="t" style="left:1712.50px;top:247.64px;font-size:12px;color:#1f2937;">TYPE:</div>
<div class="t" style="left:1876.50px;top:247.64px;font-size:12px;color:#111827;-webkit-text-stroke:0.35px #111827;letter-spacing:-1.211px;">SHARE</div>
<div class="t" style="left:1704.50px;top:282.14px;font-size:14px;color:#111827;-webkit-text-stroke:0.55px #111827;letter-spacing:-0.778px;">Graph Key</div>
<div class="t" style="left:1712.80px;top:308.34px;font-size:12px;color:#1f2937;letter-spacing:-0.175px;">Adjusted (Operating)</div>
<div class="t" style="left:1712.80px;top:323.44px;font-size:12px;color:#1f2937;letter-spacing:-0.324px;">Earnings Growth Rate:</div>
<div class="b" style="left:1863.70px;top:312.30px;width:49.30px;height:18.90px;background:#c9eedc;border-radius:3px;"></div>
<div class="t" style="left:1870.30px;top:314.94px;font-size:14px;color:#137a4b;-webkit-text-stroke:0.30px #137a4b;letter-spacing:-0.924px;">9.70%</div>
<div class="t" style="left:1712.80px;top:347.34px;font-size:12px;color:#1f2937;letter-spacing:-0.200px;">Normal P/E Ratio</div>
<div class="b" style="left:1859.30px;top:343.30px;width:53.70px;height:19.40px;background:#dbe7fd;border-radius:3px;"></div>
<div class="t" style="left:1866.30px;top:346.14px;font-size:14px;color:#1a5ff0;-webkit-text-stroke:0.30px #1a5ff0;letter-spacing:-0.407px;">13.70x</div>
<div class="b" style="left:1712px;top:373.9px;width:7px;height:7px;border-radius:50%;background:#b7e6cf"></div>
<div class="t" style="left:1728.00px;top:371.34px;font-size:12px;color:#1f2937;letter-spacing:-0.209px;">Dividends declared</div>
<div class="b" style="left:1712px;top:390.8px;width:7px;height:7px;border-radius:50%;background:#d8d9e2"></div>
<div class="t" style="left:1728.00px;top:388.24px;font-size:12px;color:#1f2937;letter-spacing:-0.292px;">Recessions</div>
<div class="b" style="left:1712px;top:407.6px;width:7px;height:7px;border-radius:50%;background:#d5f1ea"></div>
<div class="t" style="left:1728.00px;top:405.04px;font-size:12px;color:#1f2937;letter-spacing:-0.218px;">Dividend yield and payout</div>
<div class="t" style="left:1704.70px;top:439.44px;font-size:14px;color:#111827;-webkit-text-stroke:0.55px #111827;letter-spacing:-0.371px;">Company info</div>
<div class="t" style="left:1712.50px;top:465.94px;font-size:12px;color:#1f2937;letter-spacing:-0.752px;">GICS Sub-</div>
<div class="t" style="left:1811.40px;top:465.94px;font-size:12px;color:#111827;-webkit-text-stroke:0.35px #111827;letter-spacing:-0.364px;">Oil &amp; Gas Storage &amp;</div>
<div class="t" style="left:1712.50px;top:480.84px;font-size:12px;color:#1f2937;">industry:</div>
<div class="t" style="left:1836.70px;top:480.84px;font-size:12px;color:#111827;-webkit-text-stroke:0.35px #111827;letter-spacing:-0.056px;">Transportation</div>
<div class="t" style="left:1712.50px;top:502.14px;font-size:12px;color:#1f2937;letter-spacing:-0.222px;">Country:</div>
<div class="t" style="left:1849.70px;top:502.14px;font-size:12px;color:#111827;-webkit-text-stroke:0.35px #111827;letter-spacing:-0.151px;">Netherlands</div>
<div class="t" style="left:1712.50px;top:524.14px;font-size:12px;color:#1f2937;letter-spacing:-0.316px;">Market Cap:</div>
<div class="t" style="left:1855.20px;top:524.14px;font-size:12px;color:#111827;-webkit-text-stroke:0.35px #111827;letter-spacing:-0.629px;">EUR 4.36 B</div>
<div class="t" style="left:1712.50px;top:545.94px;font-size:12px;color:#1f2937;letter-spacing:-0.347px;">S&amp;P Credit Rating:</div>
<div class="t" style="left:1712.50px;top:567.64px;font-size:12px;color:#1f2937;letter-spacing:-0.187px;">LT Debt/Capital:</div>
<div class="t" style="left:1874.60px;top:567.64px;font-size:12px;color:#111827;-webkit-text-stroke:0.35px #111827;letter-spacing:-0.480px;">39.93%</div>
<div class="t" style="left:1712.50px;top:589.24px;font-size:12px;color:#1f2937;letter-spacing:-0.709px;">TEV:</div>
<div class="t" style="left:1865.60px;top:589.24px;font-size:12px;color:#111827;-webkit-text-stroke:0.35px #111827;letter-spacing:-0.675px;">EUR 0.00</div>
<div class="t" style="left:1712.50px;top:613.34px;font-size:12px;color:#1a6ef5;letter-spacing:-0.130px;">Splits:</div>
<svg class="abs" style="left:1903px;top:615px" width="12" height="9"><path d="M1.5,2 L6,6.5 L10.5,2" fill="none" stroke="#1a6ef5" stroke-width="1.6"/></svg>
<div class="t" style="left:1712.50px;top:640.54px;font-size:12px;color:#1f2937;letter-spacing:0.015px;">Spinoffs:</div>
<svg class="abs" style="left:1903px;top:643px" width="12" height="9"><path d="M1.5,2 L6,6.5 L10.5,2" fill="none" stroke="#222" stroke-width="1.6"/></svg>
<div class="t" style="left:1704.80px;top:699.17px;font-size:13.5px;color:#111827;-webkit-text-stroke:0.55px #111827;letter-spacing:-0.012px;">Analyst scorecard</div>
<svg class="abs" style="left:1821.5px;top:695px" width="15" height="15" viewBox="0 0 15 15"><circle cx="7.5" cy="7.5" r="7" fill="#0b0f1a"/><rect x="6.6" y="6.3" width="1.8" height="5" fill="#fff"/><circle cx="7.5" cy="4.3" r="1.1" fill="#fff"/></svg>
<div class="t" style="left:1712.40px;top:749.84px;font-size:12px;color:#1f2937;letter-spacing:-0.509px;">One year</div>
<div class="t" style="left:1712.40px;top:821.64px;font-size:12px;color:#1f2937;letter-spacing:-0.248px;">Two years</div>
<div class="b" style="left:1810.30px;top:722.80px;width:102.70px;height:18.20px;background:#efe1fb;border-radius:3px;"></div>
<div class="b" style="left:1814.8px;top:728.7px;width:6.8px;height:6.8px;border-radius:50%;background:#9b3fe0"></div>
<div class="t" style="left:1825.00px;top:726.54px;font-size:12px;color:#111827;-webkit-text-stroke:0.40px #111827;">Beat:</div>
<div class="t" style="left:1867.40px;top:726.54px;font-size:12px;color:#1f2937;-webkit-text-stroke:0.15px #1f2937;">18.18%</div>
<div class="b" style="left:1810.30px;top:746.60px;width:102.70px;height:17.40px;background:#c2ebdc;border-radius:3px;"></div>
<div class="b" style="left:1814.8px;top:752.1px;width:6.8px;height:6.8px;border-radius:50%;background:#2fb37c"></div>
<div class="t" style="left:1825.00px;top:749.94px;font-size:12px;color:#111827;-webkit-text-stroke:0.40px #111827;">Hit:</div>
<div class="t" style="left:1867.40px;top:749.94px;font-size:12px;color:#1f2937;-webkit-text-stroke:0.15px #1f2937;">45.45%</div>
<div class="b" style="left:1810.30px;top:769.60px;width:102.70px;height:17.40px;background:#fde3e3;border-radius:3px;"></div>
<div class="b" style="left:1814.8px;top:775.1px;width:6.8px;height:6.8px;border-radius:50%;background:#b3262e"></div>
<div class="t" style="left:1825.00px;top:772.94px;font-size:12px;color:#111827;-webkit-text-stroke:0.40px #111827;">Miss:</div>
<div class="t" style="left:1867.40px;top:772.94px;font-size:12px;color:#1f2937;-webkit-text-stroke:0.15px #1f2937;">36.36%</div>
<div class="b" style="left:1810.30px;top:795.30px;width:102.70px;height:17.50px;background:#efe1fb;border-radius:3px;"></div>
<div class="b" style="left:1814.8px;top:800.8px;width:6.8px;height:6.8px;border-radius:50%;background:#9b3fe0"></div>
<div class="t" style="left:1825.00px;top:798.69px;font-size:12px;color:#111827;-webkit-text-stroke:0.40px #111827;">Beat:</div>
<div class="t" style="left:1874.07px;top:798.69px;font-size:12px;color:#1f2937;-webkit-text-stroke:0.15px #1f2937;">0.00%</div>
<div class="b" style="left:1810.30px;top:818.40px;width:102.70px;height:17.60px;background:#c2ebdc;border-radius:3px;"></div>
<div class="b" style="left:1814.8px;top:824.0px;width:6.8px;height:6.8px;border-radius:50%;background:#2fb37c"></div>
<div class="t" style="left:1825.00px;top:821.84px;font-size:12px;color:#111827;-webkit-text-stroke:0.40px #111827;">Hit:</div>
<div class="t" style="left:1867.40px;top:821.84px;font-size:12px;color:#1f2937;-webkit-text-stroke:0.15px #1f2937;">72.73%</div>
<div class="b" style="left:1810.30px;top:841.60px;width:102.70px;height:17.40px;background:#fde3e3;border-radius:3px;"></div>
<div class="b" style="left:1814.8px;top:847.1px;width:6.8px;height:6.8px;border-radius:50%;background:#b3262e"></div>
<div class="t" style="left:1825.00px;top:844.94px;font-size:12px;color:#111827;-webkit-text-stroke:0.40px #111827;">Miss:</div>
<div class="t" style="left:1867.40px;top:844.94px;font-size:12px;color:#1f2937;-webkit-text-stroke:0.15px #1f2937;">27.27%</div>
<div class="t" style="left:1704.80px;top:881.37px;font-size:13.5px;color:#111827;-webkit-text-stroke:0.55px #111827;letter-spacing:-0.120px;">1Y Forward With 10% margin for</div>
<div class="t" style="left:1704.80px;top:899.17px;font-size:13.5px;color:#111827;-webkit-text-stroke:0.55px #111827;letter-spacing:-0.126px;">error</div>
<svg class="abs" style="left:0;top:0" width="1920" height="1014"><path d="M1812.6,986.6 L1812.60,928.40 A58.2,58.2 0 0 1 1865.54,962.42 Z" fill="#9b40e0" stroke="#fff" stroke-width="1.5"/><path d="M1812.6,986.6 L1865.54,962.42 A58.2,58.2 0 0 1 1768.61,1024.71 Z" fill="#38b487" stroke="#fff" stroke-width="1.5"/><path d="M1812.6,986.6 L1768.61,1024.71 A58.2,58.2 0 0 1 1812.60,928.40 Z" fill="#c4262e" stroke="#fff" stroke-width="1.5"/></svg>
<div class="b" style="left:1890.5px;top:956.5px;width:42px;height:42px;border-radius:50%;background:#15254a;border:1.5px solid #fff;box-shadow:0 1px 6px rgba(0,0,0,0.18)"></div>
<svg class="abs" style="left:1901.5px;top:967px" width="22" height="24"><path d="M3,0.5 H19 Q21.5,0.5 21.5,3 V22 L17,18.5 H3 Q0.5,18.5 0.5,16 V3 Q0.5,0.5 3,0.5Z" fill="#fff"/><path d="M3.5,13 Q9.5,17 15.5,13" fill="none" stroke="#15254a" stroke-width="1.4"/></svg>
<div class="b" style="left:1538.4px;top:67.6px;width:195.6px;height:217px;background:#fff;border:1px solid #d6d9e0;border-radius:2px;box-shadow:0 1px 6px rgba(0,0,0,0.25);"></div>
<svg class="abs" style="left:1629px;top:283px" width="15" height="8"><path d="M1.5,1.3 L7.2,6.8 L12.9,1.3Z" fill="#fff"/><path d="M1.5,1.3 L7.2,6.8 L12.9,1.3" fill="none" stroke="rgba(0,0,0,0.16)" stroke-width="1"/><rect x="0" y="-1" width="15" height="2.6" fill="#fff"/></svg>
<div class="t" style="left:1606.75px;top:80.21px;font-size:10.5px;color:#5b6273;-webkit-text-stroke:0.35px #5b6273;letter-spacing:-0.360px;">Dec 31, 2027</div>
<div class="t" style="left:1550.10px;top:101.31px;font-size:10.5px;color:#5b6273;letter-spacing:-0.283px;">Closing Price:</div>
<div class="t" style="left:1672.28px;top:102.13px;font-size:10px;color:#111827;-webkit-text-stroke:0.35px #111827;">EUR 55.89</div>
<div class="t" style="left:1550.10px;top:117.81px;font-size:10.5px;color:#5b6273;">P/E:</div>
<div class="t" style="left:1696.18px;top:118.63px;font-size:10px;color:#f97316;-webkit-text-stroke:0.35px #f97316;">13.70</div>
<div class="b" style="left:1550.00px;top:133.00px;width:171.00px;height:1.00px;background:#e5e7eb;"></div>
<div class="t" style="left:1594.95px;top:140.93px;font-size:10px;color:#5b6273;-webkit-text-stroke:0.35px #5b6273;letter-spacing:-0.551px;">RATE OF RETURN:</div>
<div class="t" style="left:1550.10px;top:159.21px;font-size:10.5px;color:#5b6273;letter-spacing:-0.242px;">Market Value:</div>
<div class="t" style="left:1653.69px;top:160.03px;font-size:10px;color:#111827;-webkit-text-stroke:0.35px #111827;">EUR 14'315.53</div>
<div class="t" style="left:1550.10px;top:176.21px;font-size:10.5px;color:#5b6273;letter-spacing:-0.410px;">Growth:</div>
<div class="t" style="left:1687.28px;top:177.03px;font-size:10px;color:#15875a;-webkit-text-stroke:0.35px #15875a;">43.16%</div>
<div class="t" style="left:1550.10px;top:192.81px;font-size:10.5px;color:#5b6273;letter-spacing:-0.417px;">Ann. ROR (w/o Div):</div>
<div class="t" style="left:1687.28px;top:193.63px;font-size:10px;color:#15875a;-webkit-text-stroke:0.35px #15875a;">18.74%</div>
<div class="t" style="left:1550.10px;top:209.61px;font-size:10.5px;color:#5b6273;letter-spacing:-0.314px;">Dividends:</div>
<div class="t" style="left:1666.72px;top:210.43px;font-size:10px;color:#111827;-webkit-text-stroke:0.35px #111827;">EUR 965.37</div>
<div class="t" style="left:1550.10px;top:226.61px;font-size:10.5px;color:#5b6273;letter-spacing:-0.487px;">MV + Div:</div>
<div class="t" style="left:1653.69px;top:227.43px;font-size:10px;color:#111827;-webkit-text-stroke:0.35px #111827;">EUR 15'280.90</div>
<div class="t" style="left:1550.10px;top:243.21px;font-size:10.5px;color:#5b6273;letter-spacing:-0.527px;">Total ROR:</div>
<div class="t" style="left:1687.28px;top:244.03px;font-size:10px;color:#15875a;-webkit-text-stroke:0.35px #15875a;">52.81%</div>
<div class="t" style="left:1550.10px;top:259.71px;font-size:10.5px;color:#5b6273;letter-spacing:-0.500px;">Tot Ann ROR:</div>
<div class="t" style="left:1687.28px;top:260.53px;font-size:10px;color:#15875a;-webkit-text-stroke:0.35px #15875a;">22.50%</div>
</body></html>
